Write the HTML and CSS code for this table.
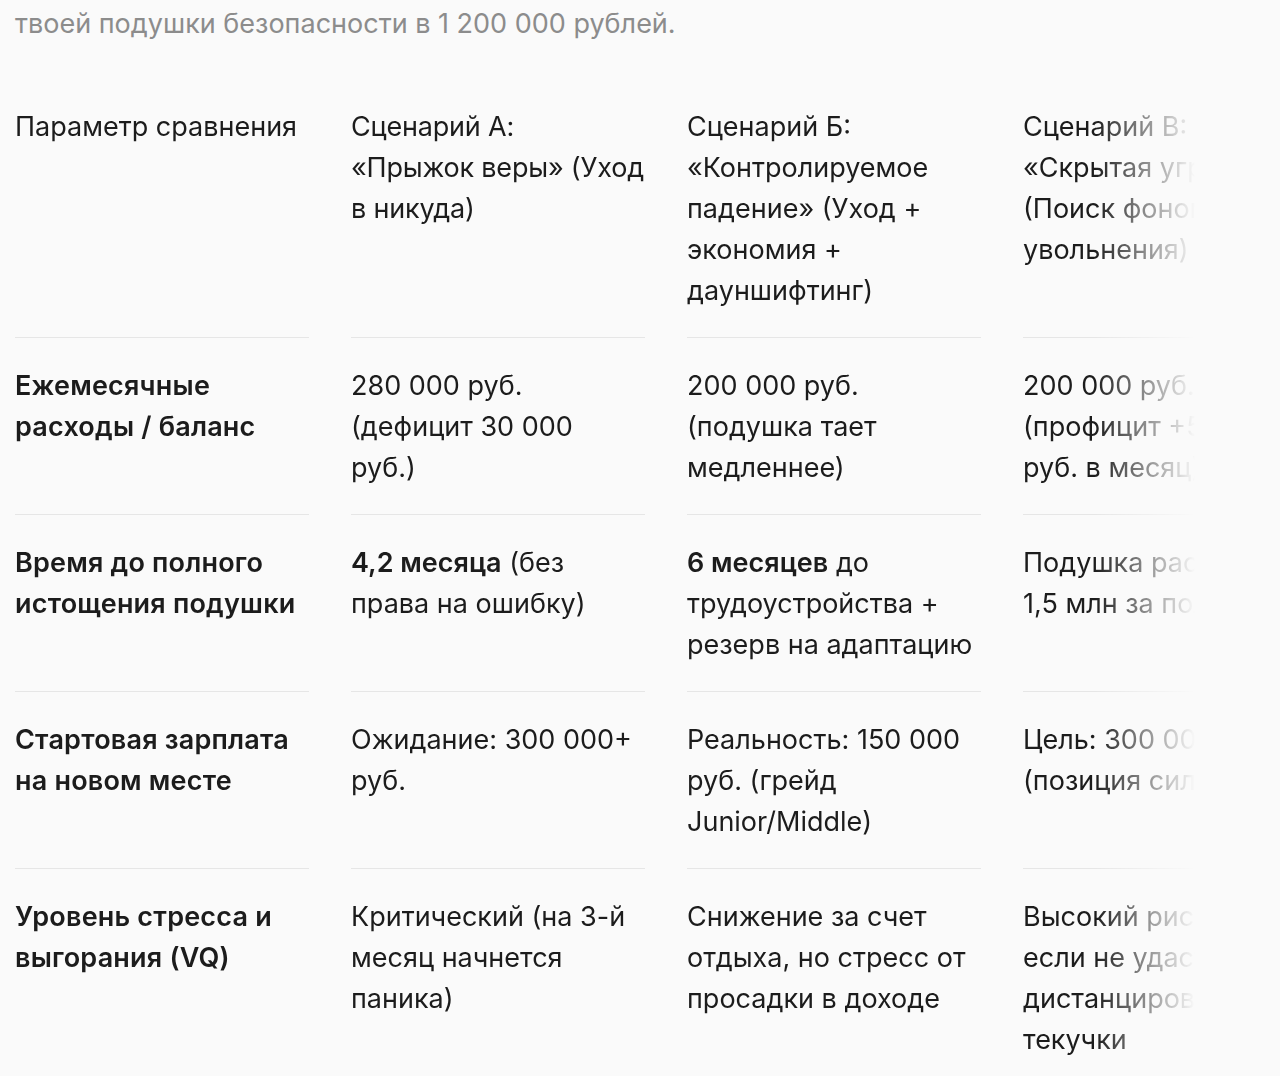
FILE: index.html
```html
<!DOCTYPE html>
<html lang="ru">
<head>
<meta charset="utf-8">
<link rel="stylesheet" href="styles.css">
</head>
<body>
<p class="lead">твоей подушки безопасности в 1 200 000 рублей.</p>
<div class="scroller">
  <div class="grid">
    <div class="cell">Параметр сравнения</div>
    <div class="cell head">Сценарий А:<br>«Прыжок веры» (Уход в никуда)</div>
    <div class="cell">Сценарий Б:<br>«Контролируемое падение» (Уход + экономия + дауншифтинг)</div>
    <div class="cell">Сценарий В:<br>«Скрытая угроза» (Поиск фоном до увольнения)</div>

    <div class="cell b">Ежемесячные расходы / баланс</div>
    <div class="cell">280 000 руб. (дефицит 30 000 руб.)</div>
    <div class="cell">200 000 руб. (подушка тает медленнее)</div>
    <div class="cell">200 000 руб. (профицит +50 000 руб. в месяц)</div>

    <div class="cell b">Время до полного истощения подушки</div>
    <div class="cell"><strong>4,2 месяца</strong> (без права на ошибку)</div>
    <div class="cell"><strong>6 месяцев</strong> до трудоустройства + резерв на адаптацию</div>
    <div class="cell">Подушка растет до 1,5 млн за полгода</div>

    <div class="cell b">Стартовая зарплата на новом месте</div>
    <div class="cell">Ожидание: 300 000+ руб.</div>
    <div class="cell">Реальность: 150 000 руб. (грейд Junior/Middle)</div>
    <div class="cell">Цель: 300 000 руб. (позиция силы)</div>

    <div class="cell b last">Уровень стресса и выгорания (VQ)</div>
    <div class="cell last">Критический (на 3-й месяц начнется паника)</div>
    <div class="cell last">Снижение за счет отдыха, но стресс от просадки в доходе</div>
    <div class="cell last">Высокий риск, если&nbsp;не&nbsp;удастся дистанцироваться от текучки</div>
  </div>
</div>
</body>
</html>
```

FILE: styles.css
```css
html, body {
  margin: 0;
  background: #fafafa;
}
body {
  padding: 3px 0 0 15px;
  font-family: Inter, "Noto Sans", sans-serif;
  font-size: 27px;
  line-height: 41px;
  color: #1c1c1c;
}
.lead {
  margin: 0 0 35px;
  color: #8c8c8c;
}
.scroller {
  width: 1180px;
  overflow: hidden;
  -webkit-mask-image: linear-gradient(to right, #000 1080px, transparent 1180px);
  mask-image: linear-gradient(to right, #000 1080px, transparent 1180px);
}
.grid {
  display: grid;
  grid-template-columns: repeat(4, 294px);
  column-gap: 42px;
}
.cell {
  padding: 27px 0 26px;
  border-bottom: 1px solid #e6e6e6;
}
.cell.head {
  letter-spacing: -0.2px;
}
.cell.last {
  border-bottom: none;
}
.b {
  font-weight: 600;
  letter-spacing: 0.2px;
}
strong {
  font-weight: 600;
}
```
